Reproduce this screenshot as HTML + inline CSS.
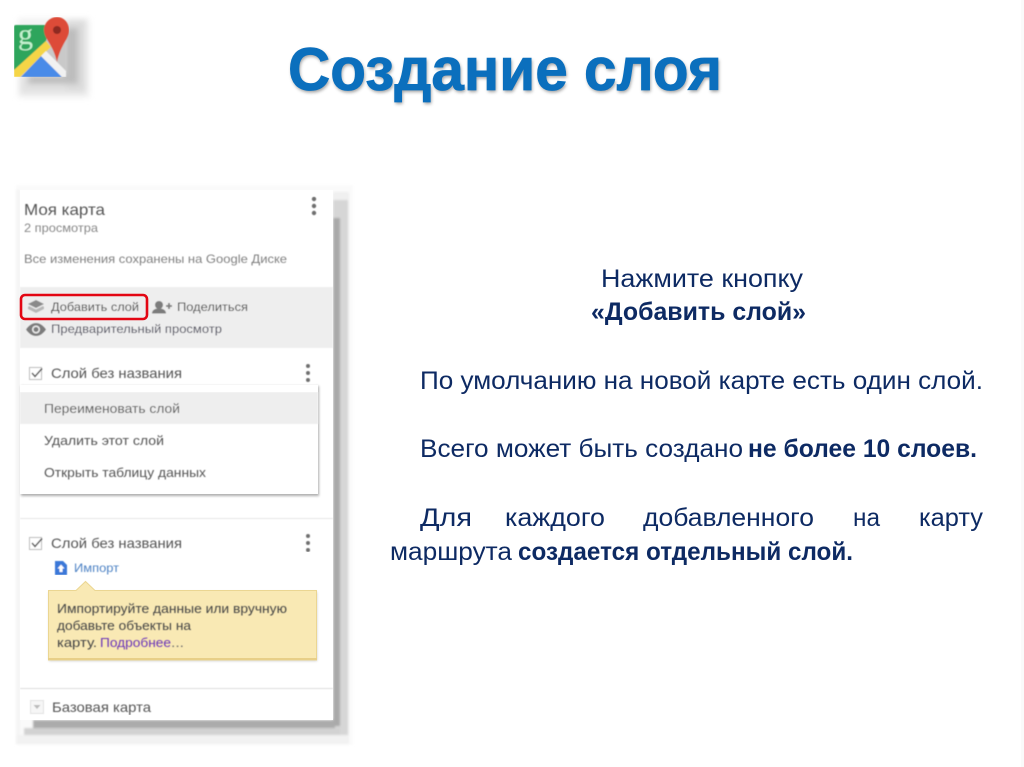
<!DOCTYPE html>
<html lang="ru"><head><meta charset="utf-8"><title>Создание слоя</title>
<style>
html,body{margin:0;padding:0;background:#fff;width:1024px;height:767px;overflow:hidden}
svg{display:block;position:absolute;left:0;top:0}
text{font-family:"Liberation Sans",sans-serif;white-space:pre}
.b{fill:#0f2a63;font-size:25px}
.bb{fill:#0f2a63;font-size:25px;font-weight:bold}
</style></head><body>
<svg width="1024" height="767" viewBox="0 0 1024 767" xmlns="http://www.w3.org/2000/svg">
<defs>
<filter id="bl" x="0" y="0" width="100%" height="100%"><feGaussianBlur stdDeviation="0.45"/></filter>
<filter id="bl1" x="0" y="0" width="100%" height="100%"><feGaussianBlur stdDeviation="0.3"/></filter>
<filter id="bl2" x="-5%" y="-5%" width="110%" height="110%"><feGaussianBlur stdDeviation="1.2"/></filter>
<filter id="bl3" x="-15%" y="-15%" width="130%" height="130%"><feGaussianBlur stdDeviation="3"/></filter>
<filter id="bl4" x="-5%" y="-5%" width="110%" height="110%"><feGaussianBlur stdDeviation="1"/></filter>
<filter id="ts" x="-5%" y="-20%" width="110%" height="140%"><feGaussianBlur stdDeviation="1.6"/></filter>
</defs>
<rect x="0" y="0" width="1024" height="767" fill="#fff"/>
<rect x="1021" y="0" width="3" height="767" fill="#fafafa"/>

<!-- logo shadow -->
<g filter="url(#bl3)">
<rect x="18" y="18" width="72" height="80" fill="#f3f3f3"/>
<rect x="20" y="76" width="66" height="18" fill="#e2e2e2"/>
<rect x="66" y="20" width="20" height="70" fill="#dcdcdc"/>
<rect x="64" y="28" width="14" height="56" fill="#bdbdbd"/>
<rect x="28" y="75" width="50" height="9" fill="#bdbdbd"/>
</g>
<!-- logo -->
<g filter="url(#bl)">
<rect x="14" y="25" width="52" height="52" rx="2" fill="#c9c9c9"/>
<path d="M14 27q0-2 2-2h34l-4 16-32 30z" fill="#2fa55c"/>
<path d="M14 70L46 41l5 6L20 77h-6z" fill="#f5d547"/>
<path d="M21 77L41 56 62 77z" fill="#4a8be8"/>
<path d="M41 56l5-5 20 20v6h-4z" fill="#f1f1f1"/>
<path d="M57 17c-7 0-13 6-13 13 0 9 9 14 13 32 4-18 12-23 12-32 0-7-5-13-12-13z" fill="#dd4b39"/>
<circle cx="57" cy="30" r="4" fill="#8e2a22"/>
<text x="18" y="44" font-size="30" fill="#c4f2d0" style="font-family:'Liberation Serif',serif">g</text>
</g>

<!-- title -->
<text x="289" y="92" font-size="60" font-weight="bold" fill="#555" opacity=".55" filter="url(#ts)" textLength="434" lengthAdjust="spacingAndGlyphs">Создание слоя</text>
<text x="288" y="90" font-size="60" font-weight="bold" fill="#0b6fbd" stroke="#0b6fbd" stroke-width=".8" textLength="434" lengthAdjust="spacingAndGlyphs">Создание слоя</text>

<!-- panel shadow -->
<g filter="url(#bl4)">
<rect x="16" y="185" width="337" height="560" fill="#fafafa"/>
<rect x="16" y="190" width="4" height="546" fill="#f4f4f4"/>
<rect x="333" y="192" width="16" height="552" fill="#f0f0f0"/>
<rect x="333" y="200" width="15" height="535" fill="#d6d6d6"/>
<rect x="333" y="218" width="7" height="508" fill="#a9a9a9"/>
<rect x="16" y="735" width="333" height="9" fill="#f2f2f2"/>
<rect x="24" y="728" width="316" height="7" fill="#d2d2d2"/>
<rect x="33" y="720" width="302" height="8" fill="#ababab"/>
</g>

<!-- panel -->
<rect x="20" y="190" width="313" height="530" fill="#fff"/>
<g filter="url(#bl)">
<rect x="20" y="287" width="313" height="61" fill="#eeeeee"/>
<text x="24" y="215" font-size="16" fill="#555" textLength="81" lengthAdjust="spacingAndGlyphs">Моя карта</text>
<text x="24" y="232" font-size="12" fill="#888" textLength="74" lengthAdjust="spacingAndGlyphs">2 просмотра</text>
<text x="24" y="263" font-size="12" fill="#808080" textLength="263" lengthAdjust="spacingAndGlyphs">Все изменения сохранены на Google Диске</text>
<g fill="#6f6f6f"><circle cx="314" cy="199" r="2.2"/><circle cx="314" cy="206" r="2.2"/><circle cx="314" cy="213" r="2.2"/>
<circle cx="308" cy="366" r="2"/><circle cx="308" cy="373" r="2"/><circle cx="308" cy="380" r="2"/>
<circle cx="308" cy="536" r="2"/><circle cx="308" cy="543" r="2"/><circle cx="308" cy="550" r="2"/></g>

<!-- toolbar -->
<path d="M36 300l8 4-8 4-8-4z" fill="#8a8a8a"/>
<path d="M36 309.500l-7-3.500-1 1v2l8 4 8-4v-2l-1-1z" fill="#b8b8b8"/>
<text x="51" y="311" font-size="12" fill="#444" textLength="88" lengthAdjust="spacingAndGlyphs">Добавить слой</text>
<circle cx="159" cy="305" r="4" fill="#7b7b7b"/>
<path d="M152 313.500c0-3.500 3-5 7-5s7 1.500 7 5z" fill="#7b7b7b"/>
<path d="M166 306h6M169 303v6" stroke="#7b7b7b" stroke-width="1.800" fill="none"/>
<text x="177" y="311" font-size="12" fill="#444" textLength="71" lengthAdjust="spacingAndGlyphs">Поделиться</text>
<path d="M26 329.500c3-4.500 6.500-6.500 10-6.500s7 2 10 6.500c-3 4.500-6.500 6.500-10 6.500s-7-2-10-6.500z" fill="#7b7b7b"/>
<circle cx="36" cy="329.500" r="4" fill="#eee"/><circle cx="36" cy="329.500" r="2.500" fill="#7b7b7b"/>
<text x="51" y="333" font-size="12" fill="#4a4a5a" textLength="171" lengthAdjust="spacingAndGlyphs">Предварительный просмотр</text>

<!-- layer 1 -->
<rect x="29.500" y="367.500" width="12" height="12" fill="#fff" stroke="#bbb"/>
<path d="M32 373l3 3.500 7-8" stroke="#555" stroke-width="1.500" fill="none"/>
<text x="51" y="378" font-size="14" fill="#555" textLength="131" lengthAdjust="spacingAndGlyphs">Слой без названия</text>
</g>

<!-- red highlight -->
<rect x="21" y="295" width="126" height="24" rx="4" fill="none" stroke="#e30613" stroke-width="2.600"/>

<!-- menu -->
<rect x="21" y="386" width="298" height="110" fill="#777" opacity=".6" filter="url(#bl2)"/>
<rect x="20" y="385" width="298" height="109" fill="#fff"/>
<g filter="url(#bl)">
<rect x="20" y="392" width="298" height="32" fill="#eeeeee"/>
<text x="44" y="413" font-size="13" fill="#555" textLength="136" lengthAdjust="spacingAndGlyphs">Переименовать слой</text>
<text x="44" y="445" font-size="13" fill="#555" textLength="120" lengthAdjust="spacingAndGlyphs">Удалить этот слой</text>
<text x="44" y="477" font-size="13" fill="#555" textLength="162" lengthAdjust="spacingAndGlyphs">Открыть таблицу данных</text>

<rect x="20" y="518" width="313" height="1" fill="#e6e6e6"/>

<!-- layer 2 -->
<rect x="29.500" y="537.500" width="12" height="12" fill="#fff" stroke="#bbb"/>
<path d="M32 543l3 3.500 7-8" stroke="#555" stroke-width="1.500" fill="none"/>
<text x="51" y="548" font-size="14" fill="#555" textLength="131" lengthAdjust="spacingAndGlyphs">Слой без названия</text>
<path d="M55 561h8l4 4v10H55z" fill="#3b78d8"/>
<path d="M61 564.500l-3.500 4h2v3.500h3v-3.500h2z" fill="#fff"/>
<text x="74" y="572" font-size="12" fill="#4d82c4" textLength="45" lengthAdjust="spacingAndGlyphs">Импорт</text>
</g>

<!-- tooltip -->
<rect x="49" y="592" width="268" height="69" fill="#999" opacity=".5" filter="url(#bl2)"/>
<path d="M48.500 590.500H76l9.500-9 9.500 9H316.500V660H48.500z" fill="#f9e9b4" stroke="#ebd692"/>
<rect x="48" y="658" width="269" height="2" fill="#e8cf88"/>
<g filter="url(#bl)">
<text x="57" y="613" font-size="12.500" fill="#444" textLength="230" lengthAdjust="spacingAndGlyphs">Импортируйте данные или вручную</text>
<text x="57" y="630" font-size="12.500" fill="#444" textLength="134" lengthAdjust="spacingAndGlyphs">добавьте объекты на</text>
<text x="57" y="647" font-size="12.500" fill="#444" textLength="40" lengthAdjust="spacingAndGlyphs">карту.</text>
<text x="100" y="647" font-size="12.500" fill="#6a35b8" textLength="71" lengthAdjust="spacingAndGlyphs">Подробнее</text>
<text x="171" y="647" font-size="12.500" fill="#6a6a6a" textLength="13" lengthAdjust="spacingAndGlyphs">...</text>

<rect x="20" y="688" width="313" height="1" fill="#dedede"/>
<rect x="30.500" y="700.500" width="13" height="13" fill="#f6f6f6" stroke="#e2e2e2"/>
<path d="M33.500 705h7l-3.500 4z" fill="#bbb"/>
<text x="52" y="712" font-size="14" fill="#555" textLength="99" lengthAdjust="spacingAndGlyphs">Базовая карта</text>
</g>

<!-- body text -->
<g filter="url(#bl1)">
<text class="b" x="601" y="287" textLength="202" lengthAdjust="spacingAndGlyphs">Нажмите кнопку</text>
<text class="bb" x="591" y="320" textLength="215" lengthAdjust="spacingAndGlyphs">«Добавить слой»</text>
<text class="b" x="420" y="389" textLength="563" lengthAdjust="spacingAndGlyphs">По умолчанию на новой карте есть один слой.</text>
<text class="b" x="420" y="457" textLength="323" lengthAdjust="spacingAndGlyphs">Всего может быть создано</text>
<text class="bb" x="748" y="457" textLength="229" lengthAdjust="spacingAndGlyphs">не более 10 слоев.</text>
<text class="b" x="420" y="526" textLength="52" lengthAdjust="spacingAndGlyphs">Для</text>
<text class="b" x="505" y="526" textLength="100" lengthAdjust="spacingAndGlyphs">каждого</text>
<text class="b" x="643" y="526" textLength="171" lengthAdjust="spacingAndGlyphs">добавленного</text>
<text class="b" x="853" y="526" textLength="27" lengthAdjust="spacingAndGlyphs">на</text>
<text class="b" x="919" y="526" textLength="64" lengthAdjust="spacingAndGlyphs">карту</text>
<text class="b" x="390" y="560" textLength="122" lengthAdjust="spacingAndGlyphs">маршрута</text>
<text class="bb" x="518" y="560" textLength="335" lengthAdjust="spacingAndGlyphs">создается отдельный слой.</text>
</g>
</svg>
</body></html>
